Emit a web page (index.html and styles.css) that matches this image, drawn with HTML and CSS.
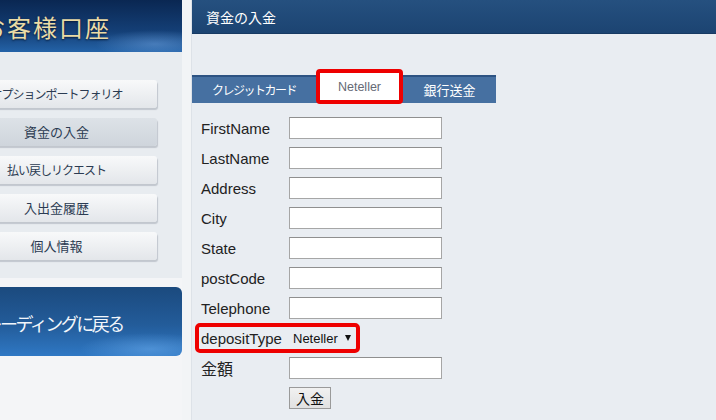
FILE: index.html
```html
<!DOCTYPE html>
<html lang="ja">
<head>
    <meta charset="UTF-8">
    <title>資金の入金</title>
    <link rel="stylesheet" href="styles.css">
</head>
<body>
    <div class="sidebar">
        <div class="sidebar-inner">
            <div class="account-banner">お客様口座</div>
            <div class="menu">
                <a class="menu-btn narrow" href="#">オプションポートフォリオ</a>
                <a class="menu-btn active" href="#">資金の入金</a>
                <a class="menu-btn narrow" href="#">払い戻しリクエスト</a>
                <a class="menu-btn" href="#">入出金履歴</a>
                <a class="menu-btn" href="#">個人情報</a>
            </div>
            <a class="back-banner" href="#">トレーディングに戻る</a>
        </div>
    </div>
    <div class="divider"></div>

    <div class="main">
        <div class="page-title">資金の入金</div>
        <div class="content">
            <div class="tabs">
                <div class="tab tab-card">クレジットカード</div>
                <div class="tab tab-neteller">Neteller</div>
                <div class="tab tab-bank">銀行送金</div>
            </div>

            <form class="deposit-form">
                <div class="row"><label>FirstName</label><input type="text"></div>
                <div class="row"><label>LastName</label><input type="text"></div>
                <div class="row"><label>Address</label><input type="text"></div>
                <div class="row"><label>City</label><input type="text"></div>
                <div class="row"><label>State</label><input type="text"></div>
                <div class="row"><label>postCode</label><input type="text"></div>
                <div class="row"><label>Telephone</label><input type="text"></div>
                <div class="row highlight">
                    <label>depositType</label>
                    <div class="select-wrap">
                        <select>
                            <option>Neteller</option>
                        </select>
                    </div>
                </div>
                <div class="row"><label class="amount">金額</label><input type="text"></div>
                <div class="row submit-row"><button type="button">入金</button></div>
            </form>
        </div>
    </div>
</body>
</html>
```

FILE: styles.css
```css
body {
    margin: 0;
    height: 420px;
    overflow: hidden;
    display: flex;
    background-color: #f4f5f7;
    font-family: "Liberation Sans", "Noto Sans CJK JP", sans-serif;
}

/* left column, scrolled partly out of view */
.sidebar {
    width: 182px;
    flex: none;
    overflow: hidden;
}

.sidebar-inner {
    width: 232px;
    margin-left: -50px;
}

.account-banner {
    height: 52px;
    padding-left: 31px;
    display: flex;
    align-items: center;
    font-family: "Noto Sans CJK JP", sans-serif;
    font-size: 24px;
    letter-spacing: 2px;
    color: #eadba6;
    text-shadow: 0 1px 2px #061a38;
    background:
        radial-gradient(ellipse 60px 14px at 205px 44px, rgba(120, 170, 230, 0.45), transparent),
        linear-gradient(to bottom, #0a2752 0%, #143f76 60%, #2463a8 100%);
}

.menu {
    display: flex;
    flex-direction: column;
    gap: 10px;
    padding: 28px 0 18px 6px;
    background-color: #e8ecf0;
}

.menu-btn {
    width: 201px;
    height: 28px;
    line-height: 28px;
    text-align: center;
    font-family: "Noto Sans CJK JP", sans-serif;
    font-size: 13px;
    color: #2b3b52;
    text-decoration: none;
    border-radius: 3px;
    background: linear-gradient(to bottom, #f8f9fa, #e3e6ea);
    box-shadow: 1px 2px 1px rgba(60, 70, 85, 0.22);
}

.menu-btn.narrow {
    font-size: 12px;
    letter-spacing: -1px;
}

.menu-btn.active {
    background: linear-gradient(to bottom, #dde2e7, #cfd5dc);
}

.back-banner {
    display: flex;
    align-items: center;
    height: 69px;
    margin-top: 9px;
    padding: 3px 0 0 19px;
    box-sizing: border-box;
    border-radius: 6px;
    font-family: "Noto Sans CJK JP", sans-serif;
    font-size: 18px;
    letter-spacing: -2.5px;
    color: #f2f6fb;
    text-decoration: none;
    background:
        radial-gradient(ellipse 70px 16px at 200px 62px, rgba(110, 175, 240, 0.5), transparent),
        linear-gradient(to bottom, #1b4a7e 0%, #235c9a 55%, #2f78c4 100%);
}

.divider {
    width: 9px;
    flex: none;
    background-color: #f2f4f6;
    border-right: 1px solid #dde2e8;
}

/* main column */
.main {
    flex: 1;
    background-color: #e9edf2;
}

.page-title {
    height: 34px;
    padding-left: 14px;
    display: flex;
    align-items: center;
    font-family: "Noto Sans CJK JP", sans-serif;
    font-size: 14px;
    color: #ffffff;
    background: linear-gradient(to bottom, #25507f, #1c4472);
    border-bottom: 1px solid #173a63;
    box-sizing: border-box;
}

.content {
    padding-top: 41px;
}

.tabs {
    display: flex;
    width: 304px;
    height: 28px;
    background: linear-gradient(to bottom, #2d5383 0, #2d5383 2px, #4670a1 2px, #4670a1 100%);
}

.tab {
    display: flex;
    align-items: center;
    justify-content: center;
    font-family: "Noto Sans CJK JP", sans-serif;
    font-size: 13px;
    color: #ffffff;
}

.tab-card {
    width: 124px;
    font-size: 12px;
    letter-spacing: -1.5px;
}

.tab-neteller {
    width: 87px;
    margin: -6px 0 -1px;
    box-sizing: border-box;
    border: 4px solid #ee0000;
    border-radius: 4px;
    background-color: #ffffff;
    font-family: "Liberation Sans", sans-serif;
    font-size: 12.5px;
    color: #666a75;
}

.tab-bank {
    width: 93px;
}

.deposit-form {
    display: flex;
    flex-direction: column;
    gap: 8px;
    margin: 14px 0 0 9px;
}

.row {
    display: flex;
    align-items: center;
    height: 22px;
}

.row label {
    width: 88px;
    font-size: 15px;
    color: #222222;
}

.row label.amount {
    font-family: "Noto Sans CJK JP", sans-serif;
    font-size: 16px;
}

.row input {
    width: 153px;
    height: 22px;
    box-sizing: border-box;
    border: 1px solid #a6a6a6;
    border-top-color: #8f8f8f;
    background-color: #ffffff;
}

.row.highlight {
    align-self: flex-start;
    margin: -4px 0 -4px -6px;
    padding: 0 3px 0 2px;
    border: 4px solid #ee0000;
    border-radius: 5px;
}

.select-wrap {
    position: relative;
    width: 64px;
}

.select-wrap select {
    width: 100%;
    height: 22px;
    padding: 0 0 0 4px;
    border: none;
    background: transparent;
    appearance: none;
    font-family: "Liberation Sans", sans-serif;
    font-size: 13px;
    color: #111111;
}

.select-wrap::after {
    content: "";
    position: absolute;
    right: 2px;
    top: 8px;
    border-left: 3px solid transparent;
    border-right: 3px solid transparent;
    border-top: 6px solid #111111;
    pointer-events: none;
}

.submit-row {
    padding-left: 88px;
}

.submit-row button {
    width: 42px;
    height: 22px;
    padding: 0;
    border: 1px solid #9a9a9a;
    background: linear-gradient(to bottom, #f1f1f1, #e1e1e1);
    font-family: "Noto Sans CJK JP", sans-serif;
    font-size: 14px;
    color: #111111;
}
```
